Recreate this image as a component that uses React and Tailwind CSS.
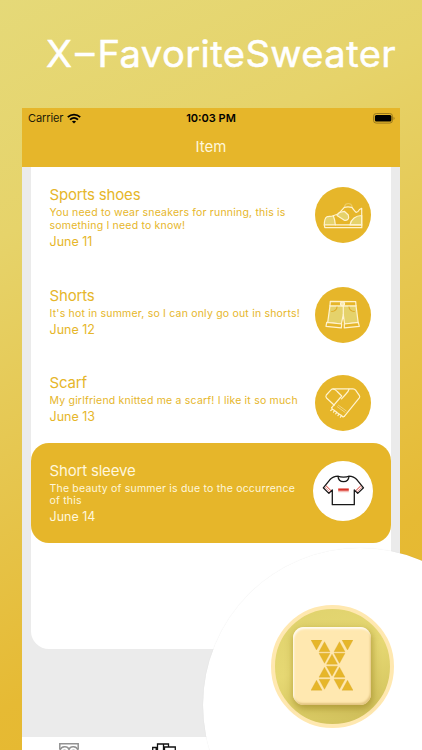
import React from 'react';

const ShoeIcon = () => (
  <svg viewBox="0 0 56 56" className="w-full h-full" fill="none" stroke="#fff3cf" strokeWidth="1.2" strokeLinejoin="round" strokeLinecap="round">
    <path d="M29.5 19.500a3.900 3.900 0 0 1 7.600 0" stroke="#eccb62" />
    <path d="M18.300 28.700L11.700 29.900c-1.700 1.500-2.400 4-2.400 8h11c-.2-3-.8-6-2-9.200z" fill="#e5d26b" stroke="none" />
    <path d="M46.700 28.500c-5.700 0-10.700 3.500-11.700 9.300h11.700z" fill="#e5d26b" />
    <path d="M24.300 25.500l5-1.200 4 3.700c.7 2 .4 3.500-.6 4.600-1.200.9-2.500 1-3.700.5l-7-4.600z" fill="#e5d26b" />
    <path d="M9.300 38c0-3.500.6-7.300 2.700-8.300 2.500-.4 4.300-.3 6.300-1 3-1 5-1.800 6.500-3.400l4.500-5c2.500-.6 5-.6 7.400 0 1.300 1.200 2.500 3.500 4.300 5 1.800.2 2.500-1 3.500-2.800l2.200-1.200v17" />
    <path d="M18.300 28.700c1.200 3 1.900 6 2 9.100" />
    <path d="M9.300 37.900h37.500v2.800H9.800z" />
  </svg>
);

const ShortsIcon = () => (
  <svg viewBox="0 0 56 56" className="w-full h-full" fill="#e5d26b" stroke="#fff3cf" strokeWidth="1.2" strokeLinejoin="round" strokeLinecap="round">
    <path d="M15 18.700h26l2.200 17-13.600 1.500-1.300-9.500-2 9.500-13.600-1.900z" />
    <path d="M15.300 14.300l25.400.3.300 4.300H15z" fill="#e6b62a" />
    <path d="M11.700 35.300l15 1.700-.4 3.900-15.300-1.600z" fill="#e6b62a" />
    <path d="M29.300 37l14-1.700 1 4-15 1.600z" fill="#e6b62a" />
    <path d="M28.300 18.700v9" />
    <circle cx="27.500" cy="16.800" r="2" fill="#f6e7a8" />
    <path d="M22 20c-.3 2.500-2 4.300-5.300 4.500M34 20c.3 2.500 2 4.300 5.300 4.500" fill="none" stroke="#dfaa28" />
  </svg>
);

const ScarfIcon = () => (
  <svg viewBox="0 0 56 56" className="w-full h-full" fill="none" stroke="#fff3cf" strokeWidth="1.2" strokeLinejoin="round" strokeLinecap="round">
    <path d="M19.300 30.200L11.500 23c-.8-1-.8-2-.2-3l4.700-5.200c.6-.6 1.300-.9 2-.9h20c1.200 0 2 .5 2.600 1.300l3.800 5.400c.5.8.4 1.600-.1 2.300L29.300 41.300" />
    <path d="M18 14c2 .2 3 1 4.200 2.500l4.500 4.500-10 11.700M34 14.200c-.3 2.300-1.800 3.700-3.500 5.300l-4 4.300" />
    <path d="M22.300 31.700l7.700 5.600M23.500 30.300l7.700 5.600" stroke="#f3dd99" strokeWidth=".8" />
    <path d="M16.700 32.700l.7 1.500-1.700 1.300M17.400 34.200l2.300 1.300-1.200 1.700M19.700 35.700l2.200 1.500-1.200 1.600M21.900 37.400l2.200 1.500-1.200 1.700M24.100 39l2.300 1.500-1 1.700M26.400 40.500l1.700 1.500 1.200-.7" />
  </svg>
);

const ShirtIcon = () => (
  <svg viewBox="0 0 60 60" className="w-full h-full" fill="none" stroke="#181818" strokeWidth="1.300" strokeLinejoin="round">
    <path d="M25.300 15.200c2 1.100 8.400 1.100 10.400 0 4 .2 6.300 1.400 8.300 3.600l6.500 8-5.800 5.600-3.400-3.500v14.800H19.300V28.900l-3.400 3.500-5.600-5.600 6.500-8c2-2.200 4.500-3.400 8.500-3.600z" />
    <path d="M25 15.200c.2 3 2.200 5.400 5.500 5.400s5.300-2.400 5.500-5.400" />
    <path d="M13.100 24.800l4.800 4.700M47.800 24.800L43 29.500" stroke="#d93126" strokeWidth="1" />
    <path d="M12 26.200l4.800 4.700M48.900 26.200l-4.800 4.700" stroke="#d93126" strokeWidth=".5" />
    <path d="M25.200 28.600h10.600" stroke="#d93126" strokeWidth="2.300" />
    <path d="M25.200 30.700h10.600" stroke="#e98c84" strokeWidth=".7" />
  </svg>
);

const items = [
  { name: 'Sports shoes', lines: ['You need to wear sneakers for running, this is', 'something I need to know!'], date: 'June 11', Icon: ShoeIcon },
  { name: 'Shorts', lines: ["It's hot in summer, so I can only go out in shorts!"], date: 'June 12', Icon: ShortsIcon },
  { name: 'Scarf', lines: ['My girlfriend knitted me a scarf! I like it so much'], date: 'June 13', Icon: ScarfIcon },
  { name: 'Short sleeve', lines: ['The beauty of summer is due to the occurrence', 'of this'], date: 'June 14', Icon: ShirtIcon, active: true },
];

const ItemRow = ({ item }) => {
  const { name, lines, date, Icon, active } = item;
  return (
    <div className={`flex justify-between pl-[18.500px] pt-[18px] ${lines.length > 1 ? 'h-[100.500px]' : 'h-[87.500px]'} ${active ? 'bg-[#e6b62a] text-[#fff7dc] rounded-[18px] pr-[18px]' : 'text-[#e6b62a] pr-5'}`}>
      <div className="whitespace-nowrap">
        <div className="text-[15px] leading-[19px] tracking-[-0.180px]">{name}</div>
        <div className="text-[10.500px] leading-[12.700px] tracking-[0.200px] mt-[3px]">
          {lines.map((line) => <div key={line}>{line}</div>)}
        </div>
        <div className="text-[12.500px] leading-[15px] mt-[1.300px]">{date}</div>
      </div>
      <div className={`shrink-0 rounded-full ${active ? 'size-[60px] bg-white' : 'size-14 mt-[1.500px] bg-[#e6b62a]'}`}>
        <Icon />
      </div>
    </div>
  );
};

const StatusBar = () => (
  <div className="grid grid-cols-3 items-center h-5 pl-1.5 pr-[5px] text-[11px] text-[#221b08]">
    <div className="flex items-center gap-1">
      <span className="tracking-[-0.100px]">Carrier</span>
      <svg viewBox="0 0 14 11" className="w-[14px] h-[11px]" fill="none" stroke="#000" strokeWidth="1.800">
        <path d="M.8 4.200c3.600-3.500 8.800-3.500 12.400 0M3 6.700c2.400-2.200 5.600-2.200 8 0" />
        <path d="M7 10.600L4.900 8.400c1.200-1 3-1 4.200 0z" fill="#000" stroke="none" />
      </svg>
    </div>
    <div className="text-center font-semibold text-black whitespace-nowrap pr-px">10:03 PM</div>
    <svg viewBox="0 0 22 11" className="w-[22px] h-[11px] justify-self-end">
      <rect x=".5" y=".5" width="19" height="9.600" rx="2.800" fill="none" stroke="#8b6d1a" strokeWidth=".8" />
      <rect x="1.900" y="2" width="16.500" height="6.600" rx="1.500" fill="#000" />
      <path d="M20.600 3.800c1.200.5 1.200 2.600 0 3.100z" fill="#8b6d1a" />
    </svg>
  </div>
);

const TabBar = () => (
  <div className="flex h-[53px] bg-white">
    <div className="flex-1 flex justify-center pt-[6px]">
      <svg viewBox="0 0 20 20" className="size-5" fill="none" stroke="#929292" strokeWidth="1.500">
        <path d="M.8 6.500V.8h18.400v5.700" />
        <path d="M1 7c1.500-3.800 7.500-4.500 9-.5 1.500-4 7.500-3.300 9 .5M3 9c1-2.500 4-2.500 5 0M12 9c1-2.500 4-2.500 5 0" />
      </svg>
    </div>
    <div className="flex-1 flex justify-center pt-[6px]">
      <svg viewBox="0 0 24 20" className="w-6 h-5" fill="none" stroke="#111" strokeWidth="1.300">
        <path d="M5.500 19V1h6v18M11.500 1h5v3M.7 19V4.500h3.500V19M12.500 19V4h10.800v15" />
      </svg>
    </div>
    <div className="flex-1" />
    <div className="flex-1" />
  </div>
);

// triangles of the logo: [left x, top y, points up]
const triangles = [
  [0, 0, false], [31, 0, false],
  [8, 1.700, true], [23, 1.700, true],
  [8, 13.300, false], [23, 13.300, false],
  [15.500, 14.200, true],
  [15.500, 26.200, false],
  [8, 27.200, true], [23, 27.200, true],
  [8, 39.300, false], [23, 39.300, false],
  [0, 40.300, true], [31, 40.300, true],
];

const Logo = () => (
  <div className="size-[123px] pr-0.5 pb-0.5 rounded-full border-4 border-[#ffe8b0] bg-[linear-gradient(160deg,#dfd26d_0%,#e6d873_45%,#d9ca64_75%,#ccbb57_100%)] flex items-center justify-center">
    <div className="size-[78px] rounded-[11px] bg-[#ffe8b0] flex items-center justify-center shadow-[1px_3px_7px_1px_rgba(140,115,20,0.500),inset_1px_2px_2px_#fffaf0,inset_-1px_-2px_2px_#e3c581]">
      <svg viewBox="0 0 42 51" className="w-[42px] h-[51px]">
        {triangles.map(([x, y, up]) => (
          <path
            key={`${x}-${y}`}
            transform={`translate(${x} ${y})`}
            d={up ? 'M5.500 0L11 10H0z' : 'M0 0h11L5.500 10z'}
            fill="#e6b62a"
            stroke="#d5a72c"
            strokeWidth=".3"
          />
        ))}
      </svg>
    </div>
  </div>
);

const App = () => {
  return (
    <div className="relative w-[422px] h-[750px] overflow-hidden bg-[linear-gradient(155deg,#e5d978_0%,#e6d36a_25%,#e6c64f_50%,#e6ba34_75%,#e6b62a_100%)] font-['Inter',sans-serif]">
      <h1 className="h-[108px] pt-[32px] pl-[46px] text-[36.500px] leading-[44px] tracking-[0.400px] text-white whitespace-nowrap [-webkit-text-stroke:0.500px_white]">
        <span className="inline-block origin-left scale-x-[1.045]">
          X<span className="inline-block -translate-y-px mx-[2.700px]">–</span>FavoriteSweater
        </span>
      </h1>
      <div className="mx-[22px] h-[642px] bg-[#ebebeb] flex flex-col">
        <div className="h-[58.500px] shrink-0 bg-[#e6b62a]">
          <StatusBar />
          <div className="h-[38px] flex items-center justify-center text-[15px] text-[#fff7dc]">Item</div>
        </div>
        <div className="mx-[9px] h-[482.500px] shrink-0 pt-[.5px] bg-white rounded-b-[18px]">
          {items.map((item) => <ItemRow key={item.name} item={item} />)}
        </div>
        <div className="mt-[87.500px]">
          <TabBar />
        </div>
      </div>
      {/* app badge over the bottom right corner */}
      <div className="absolute left-[202.500px] top-[548px] size-[314px] rounded-full bg-white shadow-[0_0_1px_rgba(0,0,0,0.100)]">
        <div className="pt-[57px] pl-[68.500px]">
          <Logo />
        </div>
      </div>
    </div>
  );
};

export default App;
